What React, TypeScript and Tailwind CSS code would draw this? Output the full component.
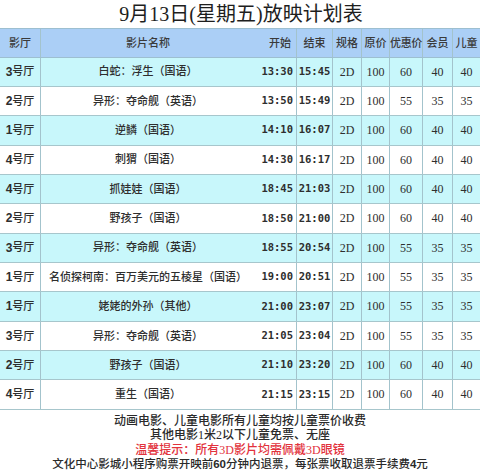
import React from 'react';

const rows = [
  { hall: '3', name: '白蛇：浮生（国语）', start: '13:30', end: '15:45', price: '60', member: '40', child: '40' },
  { hall: '2', name: '异形：夺命舰（英语）', start: '13:50', end: '15:49', price: '55', member: '35', child: '35' },
  { hall: '1', name: '逆鳞（国语）', start: '14:10', end: '16:07', price: '60', member: '40', child: '40' },
  { hall: '4', name: '刺猬（国语）', start: '14:30', end: '16:17', price: '60', member: '40', child: '40' },
  { hall: '4', name: '抓娃娃（国语）', start: '18:45', end: '21:03', price: '60', member: '40', child: '40' },
  { hall: '2', name: '野孩子（国语）', start: '18:50', end: '21:00', price: '60', member: '40', child: '40' },
  { hall: '3', name: '异形：夺命舰（英语）', start: '18:55', end: '20:54', price: '55', member: '35', child: '35' },
  { hall: '1', name: '名侦探柯南：百万美元的五棱星（国语）', start: '19:00', end: '20:51', price: '55', member: '35', child: '35' },
  { hall: '1', name: '姥姥的外孙（其他）', start: '21:00', end: '23:07', price: '55', member: '35', child: '35' },
  { hall: '3', name: '异形：夺命舰（英语）', start: '21:05', end: '23:04', price: '55', member: '35', child: '35' },
  { hall: '2', name: '野孩子（国语）', start: '21:10', end: '23:20', price: '60', member: '40', child: '40' },
  { hall: '4', name: '重生（国语）', start: '21:15', end: '23:15', price: '60', member: '40', child: '40' },
];

const cols = 'grid grid-cols-[41px_214px_42px_36px_29px_28px_33px_30px_27px]';
const cell = 'flex items-center justify-center whitespace-nowrap border-r border-[#a3c3cc]';
const mono = { fontFamily: '"DejaVu Sans Mono", "Liberation Mono", monospace' };
const sans = { fontFamily: '"Liberation Sans", sans-serif' };

export default function App() {
  return (
    <div
      className="w-[480px] h-[470px] bg-white overflow-hidden text-[#2e2e2e]"
      style={{ fontFamily: '"Liberation Serif", "Noto Sans CJK SC", serif' }}
    >
      {/* Title */}
      <div className="h-[28px] flex items-center justify-center text-[20px] text-[#1e1e1e] pl-[2px]">
        9月13日(星期五)放映计划表
      </div>

      {/* Header */}
      <div className={`${cols} h-[29.5px] bg-[#abcff6] border-t border-b border-[#9dbfd0] text-[11px] font-medium text-[#3a3a3a]`}>
        <div className={cell}>影厅</div>
        <div className="flex items-center justify-center">影片名称</div>
        <div className={`${cell} justify-end pr-[5px]`}>开始</div>
        <div className={cell}>结束</div>
        <div className={cell}>规格</div>
        <div className={cell}>原价</div>
        <div className={`${cell} tracking-[-0.3px]`}>优惠价</div>
        <div className={cell}>会员</div>
        <div className="flex items-center justify-center">儿童</div>
      </div>

      {/* Rows */}
      {rows.map((r, i) => (
        <div
          key={i}
          className={`${cols} h-[29.35px] border-b border-[#a7c6cc] text-[12px] ${i % 2 === 0 ? 'bg-[#c8f7fb]' : 'bg-white'}`}
        >
          <div className={`${cell} text-[11px] font-medium`}>
            <span className="font-bold text-[12px]" style={sans}>{r.hall}</span>
            <span>号厅</span>
          </div>
          <div className="flex items-center justify-center whitespace-nowrap text-[11px] font-medium">{r.name}</div>
          <div className={`${cell} justify-end pr-[3px] font-bold text-[10.5px]`} style={mono}>{r.start}</div>
          <div className={`${cell} font-bold text-[10.5px]`} style={mono}>{r.end}</div>
          <div className={cell}>2D</div>
          <div className={cell}>100</div>
          <div className={cell}>{r.price}</div>
          <div className={cell}>{r.member}</div>
          <div className="flex items-center justify-center">{r.child}</div>
        </div>
      ))}

      {/* Footer notes */}
      <div className="flex flex-col items-center pt-[4px] text-[12px] leading-[14.6px] font-medium text-[#2a2a2a]">
        <div>动画电影、儿童电影所有儿童均按儿童票价收费</div>
        <div>其他电影1米2以下儿童免票、无座</div>
        <div className="text-[#e2323c]">温馨提示：所有3D影片均需佩戴3D眼镜</div>
        <div className="text-[11.5px]">
          文化中心影城小程序购票开映前<span className="font-bold" style={sans}>60</span>分钟内退票，每张票收取退票手续费<span className="font-bold" style={sans}>4</span>元
        </div>
      </div>
    </div>
  );
}
